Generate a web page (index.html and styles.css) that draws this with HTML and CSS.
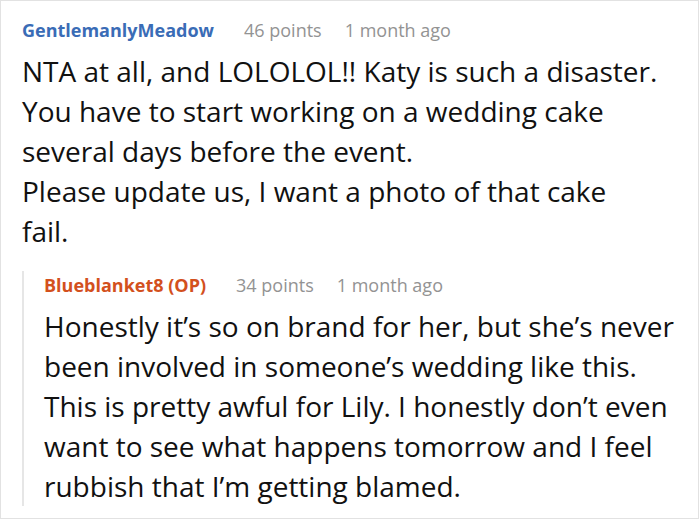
FILE: index.html
```html
<!DOCTYPE html>
<html>
<head>
<meta charset="utf-8">
<link rel="stylesheet" href="styles.css">
</head>
<body>
<div class="frame">
  <div class="comment">
    <div class="meta">
      <span class="author">GentlemanlyMeadow</span>
      <span class="points">46 points</span>
      <span class="time">1 month ago</span>
    </div>
    <div class="text">NTA at all, and LOLOLOL!! Katy is such a disaster.<br>You have to start working on a wedding cake<br>several days before the event.<br>Please update us, I want a photo of that cake<br>fail.</div>
  </div>
  <div class="reply">
    <div class="meta">
      <span class="author op">Blueblanket8 (OP)</span>
      <span class="points">34 points</span>
      <span class="time">1 month ago</span>
    </div>
    <div class="text">Honestly it’s so on brand for her, but she’s never<br>been involved in someone’s wedding like this.<br>This is pretty awful for Lily. I honestly don’t even<br>want to see what happens tomorrow and I feel<br>rubbish that I’m getting blamed.</div>
  </div>
</div>
</body>
</html>
```
FILE: styles.css
```css
html, body {
  margin: 0;
  padding: 0;
  background: #fff;
}
.frame {
  box-sizing: border-box;
  width: 699px;
  height: 519px;
  border: 1px solid #e2e2e2;
  padding: 15px 0 0 21px;
  font-family: "Open Sans", "Noto Sans", sans-serif;
}
.meta {
  display: flex;
  align-items: baseline;
  font-size: 18px;
  line-height: 28px;
}
.author {
  font-weight: 700;
  color: #3a6cb6;
}
.author.op {
  color: #d3501d;
}
.points {
  color: #939393;
  margin-left: 30px;
}
.time {
  color: #939393;
  margin-left: 23px;
}
.text {
  font-size: 28px;
  line-height: 40px;
  color: #111;
  margin-top: 7px;
}
.reply {
  margin-top: 32px;
  margin-left: 0;
  border-left: 2px solid #e6e6e6;
  padding-left: 20px;
}
.reply .meta {
  margin-top: -12px;
}
.reply .text {
  margin-bottom: -6px;
}
```
